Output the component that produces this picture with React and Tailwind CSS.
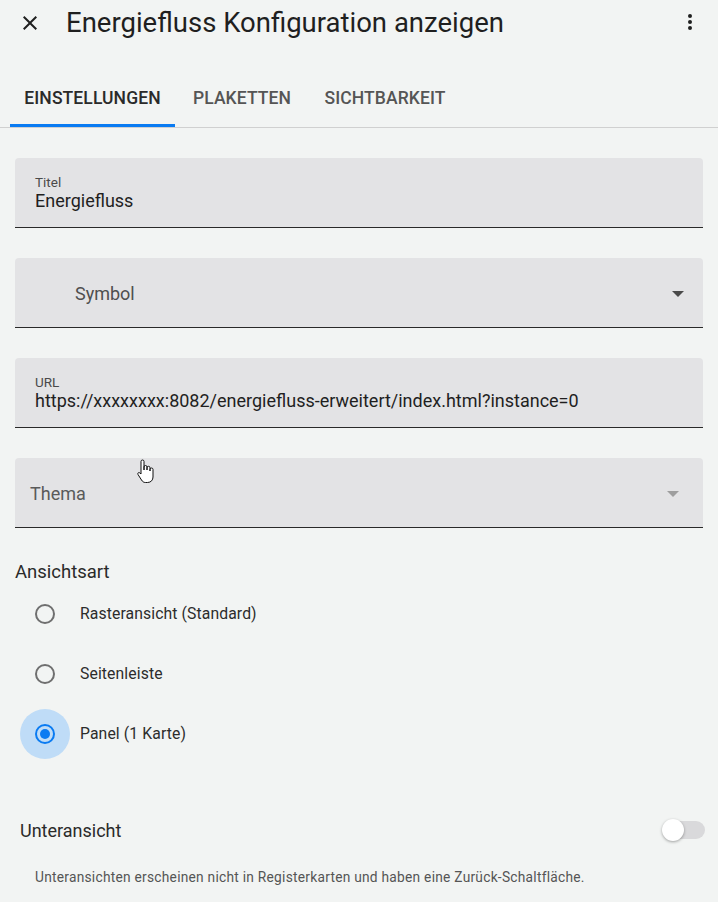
import React from "react";

function Field({ children }) {
  return (
    <div className="relative h-[70px] rounded-t-[4px] bg-[#e3e3e5] border-b border-[#2a2a2a]">
      {children}
    </div>
  );
}

function Radio({ label, checked }) {
  return (
    <div className="flex items-center h-[60px]">
      <div className="w-[50px] h-[50px] ml-[20px] flex items-center justify-center">
        {checked ? (
          <div className="w-[50px] h-[50px] rounded-full bg-[#bfdcf7] flex items-center justify-center">
            <div className="w-[20px] h-[20px] rounded-full border-2 border-[#0a7bf2] flex items-center justify-center">
              <div className="w-[10px] h-[10px] rounded-full bg-[#0a7bf2]" />
            </div>
          </div>
        ) : (
          <div className="w-[20px] h-[20px] rounded-full border-2 border-[#6f6f6f]" />
        )}
      </div>
      <span className="ml-[10px] text-[15.75px] leading-[20px] tracking-[0.1px] text-[#2c2c2c]">{label}</span>
    </div>
  );
}

export default function App() {
  return (
    <div className="w-[718px] h-[902px] bg-[#f2f4f3] overflow-hidden relative" style={{ fontFamily: "Roboto, 'Noto Sans', sans-serif" }}>
      {/* header */}
      <div className="flex items-center h-[46px] relative">
        <svg width="24" height="24" viewBox="0 0 24 24" className="ml-[18px]">
          <path d="M19 6.41L17.59 5 12 10.59 6.41 5 5 6.41 10.59 12 5 17.59 6.41 19 12 13.41 17.59 19 19 17.59 13.41 12z" fill="#1f1f1f" />
        </svg>
        <div className="ml-[24px] text-[27.5px] leading-[34px] text-[#1f1f1f]">Energiefluss Konfiguration anzeigen</div>
        <svg width="24" height="24" viewBox="0 0 24 24" className="absolute left-[678px] top-[10px]">
          <path d="M12 16a2 2 0 1 1 0 4 2 2 0 0 1 0-4zm0-6a2 2 0 1 1 0 4 2 2 0 0 1 0-4zm0-6a2 2 0 1 1 0 4 2 2 0 0 1 0-4z" fill="#1f1f1f" />
        </svg>
      </div>
      {/* tabs */}
      <div className="mt-[30px] border-b border-[#d0d0d0] flex h-[52px]">
        <div className="ml-[10px] w-[165px] relative flex items-center justify-center pb-[7px] text-[17.5px] font-medium text-[#2a2a2a] tracking-[0.1px]">
          EINSTELLUNGEN
          <div className="absolute left-0 right-0 bottom-0 h-[3px] bg-[#0a7bf2]" />
        </div>
        <div className="w-[134px] flex items-center justify-center pb-[7px] text-[17.5px] font-medium text-[#555555] tracking-[0.1px]">PLAKETTEN</div>
        <div className="w-[152px] flex items-center justify-center pb-[7px] text-[17.5px] font-medium text-[#555555] tracking-[0.1px]">SICHTBARKEIT</div>
      </div>
      {/* fields */}
      <div className="px-[15px] mt-[30px] flex flex-col gap-[30px]">
        <Field>
          <div className="absolute left-[20px] top-[14px] text-[13.5px] leading-[20px] text-[#4a4a4a]">Titel</div>
          <div className="absolute left-[20px] top-[29px] text-[18px] leading-[27px] text-[#1f1f1f]">Energiefluss</div>
        </Field>
        <Field>
          <div className="absolute left-[60px] top-[22px] text-[18px] leading-[27px] text-[#4f4f4f]">Symbol</div>
          <svg width="12" height="6" viewBox="0 0 12 6" className="absolute right-[19px] top-[33px]">
            <path d="M0 0 L12 0 L6 6 Z" fill="#4a4a4a" />
          </svg>
        </Field>
        <Field>
          <div className="absolute left-[20px] top-[14px] text-[13.5px] leading-[20px] text-[#4a4a4a]">URL</div>
          <div className="absolute left-[20px] top-[29px] text-[18px] leading-[27px] text-[#1f1f1f]">https://xxxxxxxx:8082/energiefluss-erweitert/index.html?instance=0</div>
        </Field>
        <Field>
          <div className="absolute left-[15px] top-[22px] text-[18px] leading-[27px] text-[#5a5a5a]">Thema</div>
          <svg width="12" height="6" viewBox="0 0 12 6" className="absolute right-[24px] top-[33px]">
            <path d="M0 0 L12 0 L6 6 Z" fill="#9e9e9e" />
          </svg>
        </Field>
      </div>
      {/* cursor */}
      <svg width="20" height="26" viewBox="0 0 20 26" className="absolute left-[136px] top-[459px]">
        <path d="M5 2.5 a1.5 1.5 0 0 1 3 0 V11 l0-3 a1.5 1.5 0 0 1 3 0 v3 l0-2.2 a1.5 1.5 0 0 1 3 0 V12 l0-1.5 a1.5 1.5 0 0 1 3 0 V18 c0 3-2 5.5-5.5 5.5 H9.5 c-2 0-3-1-4-2.5 L2 15.5 c-.8-1.2.6-2.6 1.8-1.6 L5 15 Z" fill="#ffffff" stroke="#111" strokeWidth="1" strokeLinejoin="round" />
      </svg>
      {/* Ansichtsart */}
      <div className="mt-[30px] ml-[15px] text-[18.5px] leading-[28px] text-[#2a2a2a]">Ansichtsart</div>
      <div className="mt-[-2px] flex flex-col">
        <Radio label="Rasteransicht (Standard)" />
        <Radio label="Seitenleiste" />
        <Radio label="Panel (1 Karte)" checked />
      </div>
      {/* Unteransicht */}
      <div className="mt-[46px] flex items-center justify-between pl-[20px] pr-[13px] h-[40px]">
        <div className="text-[18px] leading-[27px] text-[#2a2a2a]">Unteransicht</div>
        <div className="relative w-[43px] h-[18px]">
          <div className="absolute left-[7px] right-0 top-0 h-[18px] rounded-full bg-[#d9d9db]" />
          <div className="absolute left-0 top-[-2px] w-[22px] h-[22px] rounded-full bg-white shadow-[0_1px_3px_rgba(0,0,0,0.35)]" />
        </div>
      </div>
      <div className="mt-[17px] ml-[35px] text-[13.75px] leading-[20px] tracking-[0.25px] text-[#555555]">Unteransichten erscheinen nicht in Registerkarten und haben eine Zurück-Schaltfläche.</div>
    </div>
  );
}
